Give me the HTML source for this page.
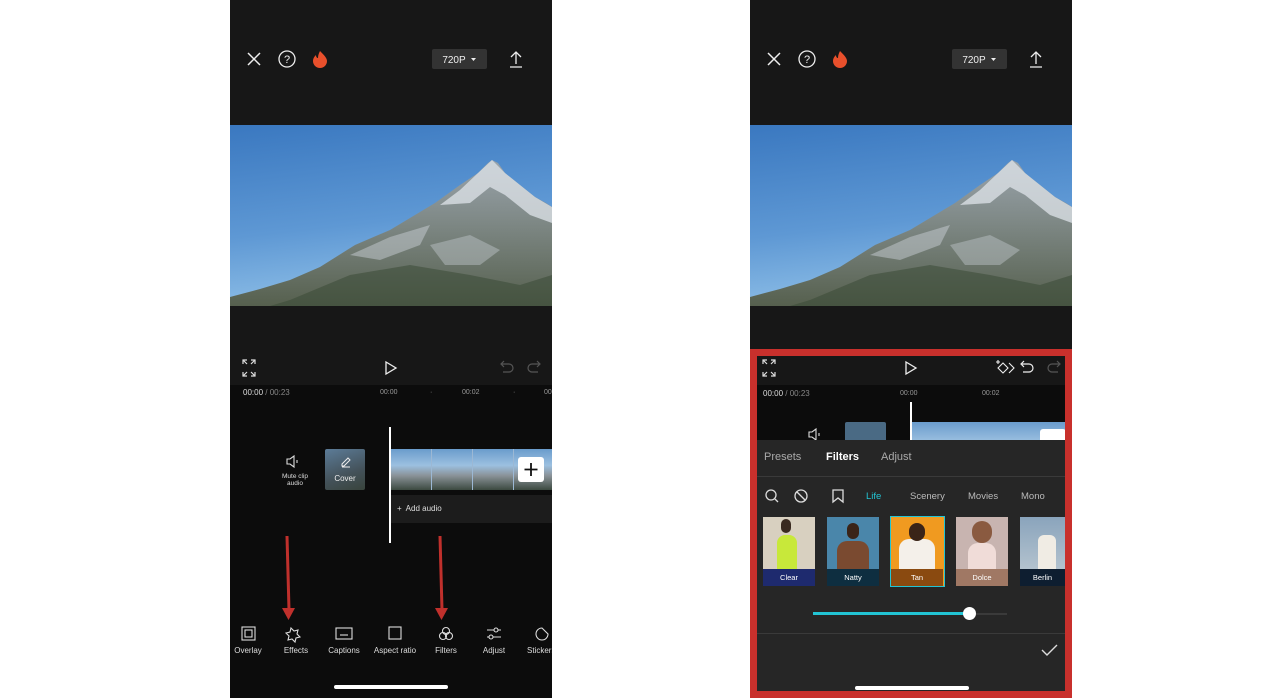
<!DOCTYPE html>
<html><head><meta charset="utf-8"><style>
*{margin:0;padding:0;box-sizing:border-box}
body{width:1280px;height:698px;background:#fff;position:relative;overflow:hidden;font-family:"Liberation Sans",sans-serif;color:#fff}
.ph{position:absolute;top:0;width:322px;height:698px;background:#0c0c0c;overflow:hidden}
.a{position:absolute}
.t{position:absolute;white-space:nowrap}
svg.i{position:absolute;overflow:visible}
.lbl{font-size:8px;color:#ddd;transform:translateX(-50%)}
</style></head><body>
<svg width="0" height="0" style="position:absolute"><defs>
<linearGradient id="sky" x1="0" y1="0" x2="0.2" y2="1"><stop offset="0" stop-color="#3a78c0"/><stop offset="0.6" stop-color="#5e98d4"/><stop offset="1" stop-color="#8cbde6"/></linearGradient>
<linearGradient id="mt" x1="0" y1="0" x2="0" y2="1"><stop offset="0" stop-color="#9aa4ac"/><stop offset="0.4" stop-color="#808a88"/><stop offset="1" stop-color="#56604e"/></linearGradient>
<g id="img">
<rect width="322" height="181" fill="url(#sky)"/>
<polygon points="0,172 30,164 60,155 90,142 125,120 160,105 180,93 205,78 230,60 248,48 258,38 262,35 268,38 275,48 290,60 305,72 316,78 322,82 322,181 0,181" fill="url(#mt)"/>
<polygon points="248,48 230,65 210,80 240,78 260,62 275,70 300,90 322,98 322,82 305,72 290,60 275,48 262,35" fill="#dfe4ea" opacity="0.75"/>
<polygon points="120,130 160,112 200,100 190,120 150,135" fill="#c8ced4" opacity="0.5"/>
<polygon points="60,175 120,150 180,140 240,150 290,160 322,150 322,181 40,181" fill="#3a4a36" opacity="0.55"/>
<polygon points="200,120 240,110 270,125 250,140 215,140" fill="#c0c8cc" opacity="0.45"/>
</g>
</defs></svg>

<!-- LEFT PHONE -->
<div class="ph" style="left:230px">
<div class="a" style="left:0;top:0;width:322px;height:385px;background:#171717"></div>
<svg class="i" style="left:0;top:0" width="322" height="130">
<path d="M18 53l12 12M30 53l-12 12" stroke="#eee" stroke-width="1.5"/>
<circle cx="57" cy="59" r="8" stroke="#eee" stroke-width="1.3" fill="none"/>
<text x="57" y="63" font-size="11" fill="#eee" text-anchor="middle" font-family="Liberation Sans">?</text>
<path d="M90 51c4 4 7 7 7 10a7 7 0 0 1-14 0c0-3 2-5 3-6c0 2 1 3 2 3c0-3 1-5 2-7z" fill="#e8502c"/>
<rect x="202" y="49" width="55" height="20" rx="2" fill="#333"/>
<text x="224" y="63" font-size="10" fill="#eee" text-anchor="middle" font-family="Liberation Sans">720P</text>
<path d="M241 58h5l-2.5 3z" fill="#eee"/>
<path d="M286 64V52M281 57l5-5 5 5M280 67h12" stroke="#eee" stroke-width="1.3" fill="none"/>
</svg>
<svg class="i" style="left:0;top:125px" width="322" height="181"><use href="#img"/></svg>
<svg class="i" style="left:0;top:355px" width="322" height="30">
<path d="M13 9v-4h4M13 5l4 4M25 9v-4h-4M25 5l-4 4M13 17v4h4M13 21l4-4M25 17v4h-4M25 21l-4-4" stroke="#ddd" stroke-width="1.2" fill="none"/>
<path d="M156 7l10 6-10 6z" stroke="#eee" stroke-width="1.3" fill="none"/>
<path d="M272 9h7a4 4 0 0 1 0 8h-6M274 6l-3 3 3 3" stroke="#555" stroke-width="1.2" fill="none"/>
<path d="M309 9h-7a4 4 0 0 0 0 8h6M307 6l3 3-3 3" stroke="#555" stroke-width="1.2" fill="none"/>
</svg>
<div class="t" style="left:13px;top:388px;font-size:8px;color:#ddd">00:00 <span style="color:#888">/ 00:23</span></div>
<div class="t" style="left:150px;top:389px;font-size:7px;color:#999">00:00</div>
<div class="t" style="left:200px;top:389px;font-size:7px;color:#999">·</div>
<div class="t" style="left:232px;top:389px;font-size:7px;color:#999">00:02</div>
<div class="t" style="left:283px;top:389px;font-size:7px;color:#999">·</div>
<div class="t" style="left:314px;top:389px;font-size:7px;color:#999">00</div>
<svg class="i" style="left:55px;top:455px" width="20" height="14"><path d="M2 4h3l4-3v11l-4-3H2z M12 5v3" stroke="#ddd" stroke-width="1.1" fill="none"/></svg>
<div class="t lbl" style="left:65px;top:473px;font-size:6.5px;text-align:center;line-height:7px">Mute clip<br>audio</div>
<div class="a" style="left:95px;top:449px;width:40px;height:41px;border-radius:2px;overflow:hidden;background:linear-gradient(160deg,#5c7c98,#44525a 60%,#39443c)"></div>
<svg class="i" style="left:110px;top:456px" width="12" height="12"><path d="M2 8l6-6 2 2-6 6H2zM2 11h8" stroke="#eee" stroke-width="1" fill="none"/></svg>
<div class="t lbl" style="left:115px;top:474px;font-size:8px;color:#eee">Cover</div>
<div class="a" style="left:161px;top:449px;width:161px;height:41px;background:linear-gradient(180deg,#6a9ccc 0%,#9cc0e0 40%,#8a9298 65%,#3c4a40 100%)"></div>
<div class="a" style="left:201px;top:449px;width:1px;height:41px;background:#9cb8d4"></div>
<div class="a" style="left:242px;top:449px;width:1px;height:41px;background:#9cb8d4"></div>
<div class="a" style="left:283px;top:449px;width:1px;height:41px;background:#9cb8d4"></div>
<div class="a" style="left:288px;top:457px;width:26px;height:25px;background:#fff;border-radius:3px"></div>
<svg class="i" style="left:288px;top:457px" width="26" height="25"><path d="M13 6v13M6.5 12.5h13" stroke="#111" stroke-width="1.8"/></svg>
<div class="a" style="left:161px;top:495px;width:161px;height:28px;background:#1c1c1c"></div>
<div class="t" style="left:167px;top:504px;font-size:8px;color:#ddd">+&nbsp; Add audio</div>
<div class="a" style="left:159px;top:427px;width:2px;height:116px;background:#fff"></div>
<svg class="i" style="left:0;top:530px" width="322" height="95">
<path d="M57 6l2 74" stroke="#c0302c" stroke-width="3"/><path d="M52 78h13l-6.5 12z" fill="#c0302c"/>
<path d="M210 6l2 74" stroke="#c0302c" stroke-width="3"/><path d="M205 78h13l-6.5 12z" fill="#c0302c"/>
</svg>
<svg class="i" style="left:0;top:624px" width="322" height="20" fill="none" stroke="#ddd" stroke-width="1.1">
<rect x="12" y="3" width="13" height="13"/><rect x="15" y="6" width="7" height="7"/>
<path d="M61 4l3 3 4-1-1 4 3 3-4 1-1 4-3-3-4 1 1-4-3-3 4-1z"/>
<rect x="106" y="4" width="16" height="11"/><path d="M110 11h8"/>
<rect x="159" y="3" width="12" height="12"/>
<circle cx="216" cy="7" r="3.5"/><circle cx="213" cy="12" r="3.5"/><circle cx="219" cy="12" r="3.5"/>
<path d="M257 6h14M257 13h14"/><circle cx="266" cy="6" r="2" fill="#0c0c0c"/><circle cx="261" cy="13" r="2" fill="#0c0c0c"/>
<path d="M312 4a6 6 0 1 0 6 6l-6-6z"/>
</svg>
<div class="t lbl" style="left:18px;top:646px">Overlay</div>
<div class="t lbl" style="left:66px;top:646px">Effects</div>
<div class="t lbl" style="left:114px;top:646px">Captions</div>
<div class="t lbl" style="left:165px;top:646px">Aspect ratio</div>
<div class="t lbl" style="left:216px;top:646px">Filters</div>
<div class="t lbl" style="left:264px;top:646px">Adjust</div>
<div class="t" style="left:297px;top:646px;font-size:8px;color:#ddd">Stickers</div>
<div class="a" style="left:104px;top:685px;width:114px;height:4px;border-radius:2px;background:#fff"></div>
</div>

<!-- RIGHT PHONE -->
<div class="ph" style="left:750px">
<div class="a" style="left:0;top:0;width:322px;height:385px;background:#171717"></div>
<svg class="i" style="left:0;top:0" width="322" height="130">
<path d="M18 53l12 12M30 53l-12 12" stroke="#eee" stroke-width="1.5"/>
<circle cx="57" cy="59" r="8" stroke="#eee" stroke-width="1.3" fill="none"/>
<text x="57" y="63" font-size="11" fill="#eee" text-anchor="middle" font-family="Liberation Sans">?</text>
<path d="M90 51c4 4 7 7 7 10a7 7 0 0 1-14 0c0-3 2-5 3-6c0 2 1 3 2 3c0-3 1-5 2-7z" fill="#e8502c"/>
<rect x="202" y="49" width="55" height="20" rx="2" fill="#333"/>
<text x="224" y="63" font-size="10" fill="#eee" text-anchor="middle" font-family="Liberation Sans">720P</text>
<path d="M241 58h5l-2.5 3z" fill="#eee"/>
<path d="M286 64V52M281 57l5-5 5 5M280 67h12" stroke="#eee" stroke-width="1.3" fill="none"/>
</svg>
<svg class="i" style="left:0;top:125px" width="322" height="181"><use href="#img"/></svg>
<div class="a" style="left:0;top:349px;width:322px;height:349px;background:#c8302c"></div>
<div class="a" style="left:7px;top:356px;width:308px;height:29px;background:#171717"></div>
<div class="a" style="left:7px;top:385px;width:308px;height:55px;background:#0c0c0c;overflow:hidden">
 <div class="a" style="left:88px;top:37px;width:41px;height:20px;border-radius:2px;background:#4a6a84"></div>
 <div class="a" style="left:155px;top:37px;width:160px;height:20px;background:linear-gradient(180deg,#6a9ccc,#9cc0e0)"></div>
 <div class="a" style="left:283px;top:44px;width:26px;height:14px;background:#fff;border-radius:3px"></div>
 <div class="a" style="left:153px;top:17px;width:2px;height:40px;background:#fff"></div>
</div>
<svg class="i" style="left:0;top:355px" width="322" height="30">
<path d="M13 9v-4h4M13 5l4 4M25 9v-4h-4M25 5l-4 4M13 17v4h4M13 21l4-4M25 17v4h-4M25 21l-4-4" stroke="#ddd" stroke-width="1.2" fill="none"/>
<path d="M156 7l10 6-10 6z" stroke="#eee" stroke-width="1.3" fill="none"/>
<path d="M253 8l5 5-5 5-5-5zM259 8l5 5-5 5M248 5v4M246 7h4" stroke="#eee" stroke-width="1.1" fill="none"/>
<path d="M272 9h7a4 4 0 0 1 0 8h-6M274 6l-3 3 3 3" stroke="#eee" stroke-width="1.2" fill="none"/>
<path d="M309 9h-7a4 4 0 0 0 0 8h6M307 6l3 3-3 3" stroke="#555" stroke-width="1.2" fill="none"/>
</svg>
<div class="t" style="left:13px;top:389px;font-size:8px;color:#ddd">00:00 <span style="color:#888">/ 00:23</span></div>
<div class="t" style="left:150px;top:390px;font-size:7px;color:#999">00:00</div>
<div class="t" style="left:232px;top:390px;font-size:7px;color:#999">00:02</div>
<svg class="i" style="left:57px;top:428px" width="20" height="14"><path d="M2 4h3l4-3v11l-4-3H2z M12 5v3" stroke="#ddd" stroke-width="1.1" fill="none"/></svg>
<div class="a" style="left:7px;top:440px;width:308px;height:251px;background:#262626"></div>
<div class="t" style="left:14px;top:451px;font-size:11px;color:#aaa">Presets</div>
<div class="t" style="left:76px;top:451px;font-size:11px;color:#fff;font-weight:bold">Filters</div>
<div class="t" style="left:131px;top:451px;font-size:11px;color:#aaa">Adjust</div>
<div class="a" style="left:7px;top:476px;width:308px;height:1px;background:#3a3a3a"></div>
<svg class="i" style="left:0;top:486px" width="100" height="20" fill="none" stroke="#ddd" stroke-width="1.3">
<circle cx="21" cy="9" r="5"/><path d="M25 13l3 3"/>
<circle cx="51" cy="10" r="6"/><path d="M47 6l8 8"/>
<path d="M83 4h10v12l-5-4-5 4z"/>
</svg>
<div class="t" style="left:116px;top:491px;font-size:9.5px;color:#22c4d4">Life</div>
<div class="t" style="left:160px;top:491px;font-size:9.5px;color:#bbb">Scenery</div>
<div class="t" style="left:218px;top:491px;font-size:9.5px;color:#bbb">Movies</div>
<div class="t" style="left:271px;top:491px;font-size:9.5px;color:#bbb">Mono</div>
<div class="a" style="left:13px;top:517px;width:52px;height:69px;background:linear-gradient(#d8d0c0,#d8d0c0)"><div class="a" style="left:14px;top:18px;width:20px;height:34px;background:#c8e83a;border-radius:8px 8px 0 0"></div><div class="a" style="left:18px;top:2px;width:10px;height:14px;background:#3a2a20;border-radius:5px"></div><div class="a" style="left:0;bottom:0;width:52px;height:17px;background:#1e2a6e;font-size:7.5px;text-align:center;line-height:17px">Clear</div></div>
<div class="a" style="left:77px;top:517px;width:52px;height:69px;background:#4a86aa"><div class="a" style="left:10px;top:24px;width:32px;height:28px;background:#7a4a30;border-radius:10px 10px 0 0"></div><div class="a" style="left:20px;top:6px;width:12px;height:16px;background:#3a2418;border-radius:6px"></div><div class="a" style="left:0;bottom:0;width:52px;height:17px;background:#0e2e40;font-size:7.5px;text-align:center;line-height:17px">Natty</div></div>
<div class="a" style="left:140px;top:516px;width:55px;height:71px;border:1.5px solid #22c4d4;background:#f09a20"><div class="a" style="left:8px;top:22px;width:36px;height:30px;background:#f4f0ea;border-radius:10px 10px 0 0"></div><div class="a" style="left:18px;top:6px;width:16px;height:18px;background:#3a2418;border-radius:8px"></div><div class="a" style="left:0;bottom:0;width:52px;height:17px;background:#8a4a10;font-size:7.5px;text-align:center;line-height:17px">Tan</div></div>
<div class="a" style="left:206px;top:517px;width:52px;height:69px;background:#c8b4b0"><div class="a" style="left:12px;top:26px;width:28px;height:26px;background:#f0dcd8;border-radius:10px 10px 0 0"></div><div class="a" style="left:16px;top:4px;width:20px;height:22px;background:#8a5a40;border-radius:10px"></div><div class="a" style="left:0;bottom:0;width:52px;height:17px;background:#a07864;font-size:7.5px;text-align:center;line-height:17px">Dolce</div></div>
<div class="a" style="left:270px;top:517px;width:45px;height:69px;background:linear-gradient(#8aa4bc,#c0ccd4)"><div class="a" style="left:18px;top:18px;width:18px;height:34px;background:#f0ece4;border-radius:6px 6px 0 0"></div><div class="a" style="left:0;bottom:0;width:45px;height:17px;background:#0e1e30;font-size:7.5px;text-align:center;line-height:17px">Berlin</div></div>
<div class="a" style="left:63px;top:613px;width:194px;height:2px;background:#3a3a3a"></div>
<div class="a" style="left:63px;top:612px;width:156px;height:2.5px;background:#22c4d4"></div>
<div class="a" style="left:213px;top:607px;width:13px;height:13px;border-radius:50%;background:#fff"></div>
<div class="a" style="left:7px;top:633px;width:308px;height:1px;background:#3a3a3a"></div>
<svg class="i" style="left:290px;top:643px" width="20" height="14"><path d="M2 7l5 5 10-10" stroke="#ddd" stroke-width="1.4" fill="none"/></svg>
<div class="a" style="left:105px;top:686px;width:114px;height:4px;border-radius:2px;background:#fff"></div>
</div>
</body></html>
